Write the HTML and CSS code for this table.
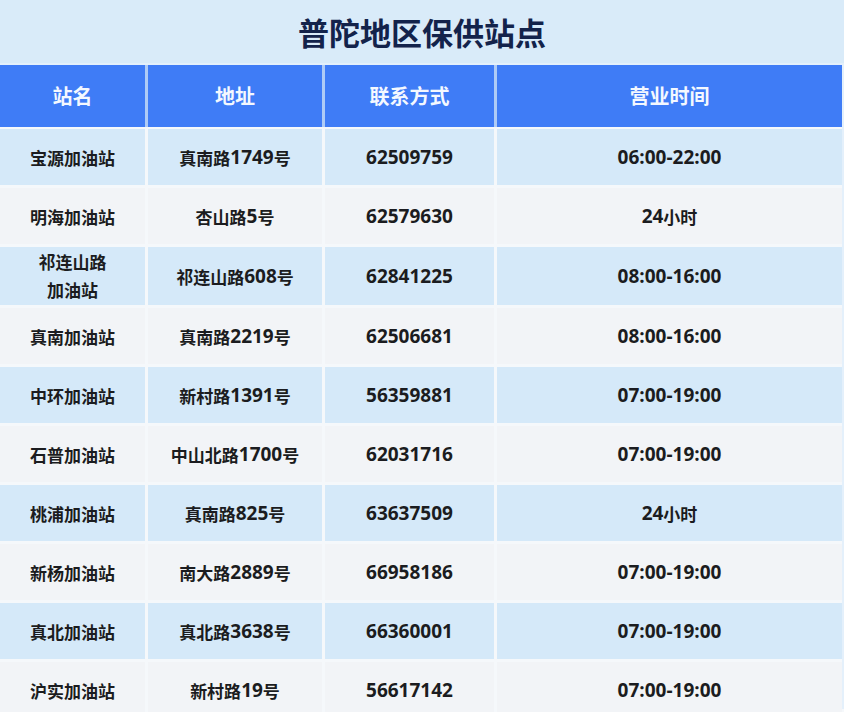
FILE: index.html
```html
<!DOCTYPE html>
<html lang="zh-CN">
<head>
<meta charset="utf-8">
<title>普陀地区保供站点</title>
<link rel="stylesheet" href="styles.css">
</head>
<body>
<div class="page">
  <h1 class="title">普陀地区保供站点</h1>
  <div class="table">
    <div class="row head">
      <div class="cell">站名</div>
      <div class="cell">地址</div>
      <div class="cell">联系方式</div>
      <div class="cell">营业时间</div>
    </div>
    <div class="row odd">
      <div class="cell">宝源加油站</div>
      <div class="cell">真南路<span class="n">1749</span>号</div>
      <div class="cell n">62509759</div>
      <div class="cell n">06:00-22:00</div>
    </div>
    <div class="row even">
      <div class="cell">明海加油站</div>
      <div class="cell">杏山路<span class="n">5</span>号</div>
      <div class="cell n">62579630</div>
      <div class="cell"><span class="n">24</span>小时</div>
    </div>
    <div class="row odd tall">
      <div class="cell two">祁连山路<br>加油站</div>
      <div class="cell">祁连山路<span class="n">608</span>号</div>
      <div class="cell n">62841225</div>
      <div class="cell n">08:00-16:00</div>
    </div>
    <div class="row even">
      <div class="cell">真南加油站</div>
      <div class="cell">真南路<span class="n">2219</span>号</div>
      <div class="cell n">62506681</div>
      <div class="cell n">08:00-16:00</div>
    </div>
    <div class="row odd">
      <div class="cell">中环加油站</div>
      <div class="cell">新村路<span class="n">1391</span>号</div>
      <div class="cell n">56359881</div>
      <div class="cell n">07:00-19:00</div>
    </div>
    <div class="row even">
      <div class="cell">石普加油站</div>
      <div class="cell">中山北路<span class="n">1700</span>号</div>
      <div class="cell n">62031716</div>
      <div class="cell n">07:00-19:00</div>
    </div>
    <div class="row odd">
      <div class="cell">桃浦加油站</div>
      <div class="cell">真南路<span class="n">825</span>号</div>
      <div class="cell n">63637509</div>
      <div class="cell"><span class="n">24</span>小时</div>
    </div>
    <div class="row even">
      <div class="cell">新杨加油站</div>
      <div class="cell">南大路<span class="n">2889</span>号</div>
      <div class="cell n">66958186</div>
      <div class="cell n">07:00-19:00</div>
    </div>
    <div class="row odd">
      <div class="cell">真北加油站</div>
      <div class="cell">真北路<span class="n">3638</span>号</div>
      <div class="cell n">66360001</div>
      <div class="cell n">07:00-19:00</div>
    </div>
    <div class="row even last">
      <div class="cell">沪实加油站</div>
      <div class="cell">新村路<span class="n">19</span>号</div>
      <div class="cell n">56617142</div>
      <div class="cell n">07:00-19:00</div>
    </div>
  </div>
</div>
</body>
</html>
```
FILE: styles.css
```css
* {
  box-sizing: border-box;
}

html, body {
  margin: 0;
  padding: 0;
}

body {
  width: 844px;
  height: 712px;
  overflow: hidden;
  background: #f5f8fb;
  font-family: "Noto Sans CJK SC", "Noto Sans", sans-serif;
  color: #1b1c20;
}

.page {
  width: 844px;
  display: flex;
  flex-direction: column;
  gap: 2px;
  background: #e4f0fb;
}

.title {
  margin: 0;
  height: 63px;
  background: #d9ebf9;
  color: #13234b;
  font-size: 31px;
  font-weight: 700;
  line-height: 63px;
  text-align: center;
  letter-spacing: 0;
}

.table {
  width: 842px;
  display: flex;
  flex-direction: column;
  gap: 3px;
  background: #f5f8fb;
}

.row {
  display: grid;
  grid-template-columns: 145px 174px 169px 345px;
  column-gap: 3px;
  height: 56px;
}

.row.head {
  height: 62px;
  background: #aecbf6;
  margin-bottom: -1px;
}

.row.tall {
  height: 58px;
}

.row.last {
  height: 47px;
  align-items: start;
}

.cell {
  display: flex;
  align-items: center;
  justify-content: center;
  text-align: center;
  font-size: 17px;
  font-weight: 700;
  line-height: 1;
}

.row.last .cell {
  height: 56px;
}

.head .cell {
  background: #3f7cf6;
  color: #f4f8ff;
  font-size: 20px;
}

.odd .cell {
  background: #d5e9f9;
}

.even .cell {
  background: #f2f4f7;
}

.n {
  font-family: "Open Sans", "Noto Sans", sans-serif;
  font-size: 19px;
  font-weight: 700;
}

.cell.two {
  line-height: 28px;
}
```
